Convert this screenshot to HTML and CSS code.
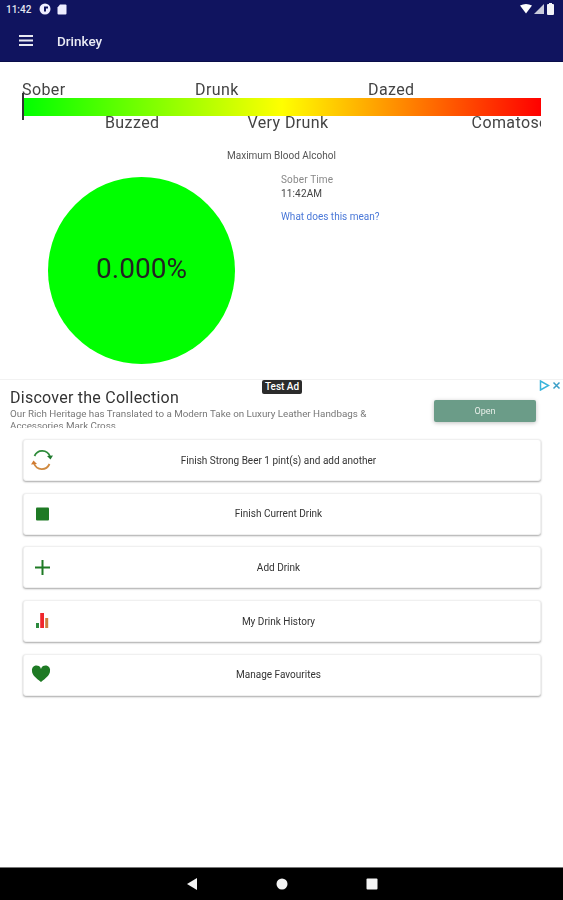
FILE: index.html
```html
<!DOCTYPE html>
<html lang="en">
<head>
<meta charset="utf-8">
<title>Drinkey</title>
<link rel="stylesheet" href="styles.css">
</head>
<body>
<div class="screen">
  <header class="appbar">
    <div class="status">
      <span class="clock">11:42</span>
      <svg class="st-icon" width="12" height="12" viewBox="0 0 12 12"><circle cx="6" cy="6" r="5.5" fill="#eef"/><path d="M5 3.500h4v2H7v3H5z" fill="#10145f"/></svg>
      <svg class="st-icon" width="10" height="11" viewBox="0 0 10 11"><path d="M3 .5h5.500a1 1 0 0 1 1 1v8a1 1 0 0 1-1 1h-7a1 1 0 0 1-1-1V3.500z" fill="#eef"/></svg>
      <span class="spacer"></span>
      <svg width="12" height="10" viewBox="0 0 12 10"><path d="M0 1.500Q6-1.500 12 1.500L6 9.500z" fill="#fff"/></svg>
      <svg class="sig" width="10" height="10" viewBox="0 0 10 10"><path d="M10 0v10H0z" fill="#c9cbdc"/></svg>
      <svg class="bat" width="7" height="12" viewBox="0 0 7 12"><path d="M2 0h3v1h1a1 1 0 0 1 1 1v9a1 1 0 0 1-1 1H1a1 1 0 0 1-1-1V2a1 1 0 0 1 1-1h1z" fill="#f2f3f8"/></svg>
    </div>
    <div class="toolbar">
      <svg class="menu" width="14" height="11" viewBox="0 0 14 11"><path d="M0 0h14v2H0zM0 4.500h14v2H0zM0 9h14v2H0z" fill="#e8e9f2"/></svg>
      <span class="title">Drinkey</span>
    </div>
  </header>

  <main class="content">
    <section class="scale">
      <div class="scale-top">
        <span>Sober</span><span>Drunk</span><span>Dazed</span>
      </div>
      <div class="bar"><i class="needle"></i></div>
      <div class="scale-bottom">
        <span class="lb-buzzed">Buzzed</span><span class="lb-very">Very Drunk</span><span class="lb-coma">Comatose</span>
      </div>
    </section>

    <p class="max-label">Maximum Blood Alcohol</p>

    <section class="gauge-row">
      <div class="gauge">0.000%</div>
      <div class="info">
        <div class="info-label">Sober Time</div>
        <div class="info-value">11:42AM</div>
        <a class="info-link">What does this mean?</a>
      </div>
    </section>

    <aside class="ad">
      <span class="ad-badge">Test Ad</span>
      <div class="ad-marks">
        <svg width="11" height="11" viewBox="0 0 11 11"><path d="M1.500 1v9l8-4.500z" fill="none" stroke="#3ab4dc" stroke-width="1.500"/></svg>
        <svg width="9" height="9" viewBox="0 0 9 9"><path d="M1.500 1.500l6 6M7.500 1.500l-6 6" stroke="#3a9fc8" stroke-width="1.500"/></svg>
      </div>
      <div class="ad-text">
        <h2>Discover the Collection</h2>
        <p>Our Rich Heritage has Translated to a Modern Take on Luxury Leather Handbags &amp; Accessories Mark Cross</p>
      </div>
      <div class="ad-open">Open</div>
    </aside>

    <nav class="actions">
      <button class="action">
        <svg class="ico" width="24" height="24" viewBox="0 -1 24 24">
          <path d="M4.500 7A8.500 9 0 0 1 20 7.500" fill="none" stroke="#2e8b3a" stroke-width="1.800"/>
          <path d="M17 7l3.500 3.500L23 6.500z" fill="#1f7a2e"/>
          <path d="M19.500 15A8.500 9 0 0 1 4 14.500" fill="none" stroke="#d08a40" stroke-width="1.800"/>
          <path d="M7 15l-3.500-3.500L1 15.500z" fill="#d07a30"/>
        </svg>
        <span>Finish Strong Beer 1 pint(s) and add another</span>
      </button>
      <button class="action">
        <svg class="ico" width="24" height="24" viewBox="0 0 24 24"><rect x="6" y="5.500" width="13" height="13" rx="1" fill="#1e7a24"/></svg>
        <span>Finish Current Drink</span>
      </button>
      <button class="action">
        <svg class="ico" width="24" height="24" viewBox="0 0 24 24"><path d="M5 12.500h15M12.500 5v15" stroke="#1e7a24" stroke-width="2"/></svg>
        <span>Add Drink</span>
      </button>
      <button class="action">
        <svg class="ico" width="24" height="24" viewBox="0 0 24 24"><rect x="6" y="14" width="3" height="5" fill="#2b8a3e"/><rect x="10.200" y="4" width="3.800" height="15" fill="#f0262c"/><rect x="15.200" y="9" width="3" height="10" fill="#cc8040"/></svg>
        <span>My Drink History</span>
      </button>
      <button class="action">
        <svg class="ico" width="24" height="24" viewBox="0 0 24 24"><path d="M11 19C6 15 2 12 2 8a4.500 4.500 0 0 1 9-2a4.500 4.500 0 0 1 9 2c0 4-4 7-9 11z" fill="#1e7a24"/></svg>
        <span>Manage Favourites</span>
      </button>
    </nav>
  </main>

  <footer class="sysnav">
    <svg width="12" height="12" viewBox="0 0 12 12"><path d="M11 0v12L1 6z" fill="#f4f4f4"/></svg>
    <svg width="12" height="12" viewBox="0 0 12 12"><circle cx="6" cy="6" r="5.500" fill="#f4f4f4"/></svg>
    <svg width="12" height="12" viewBox="0 0 12 12"><rect x=".5" y=".5" width="11" height="11" rx="1" fill="#f4f4f4"/></svg>
  </footer>
</div>
</body>
</html>
```
FILE: styles.css
```css
* { box-sizing: border-box; }
html, body { margin: 0; padding: 0; background: #fff; }
body { font-family: Roboto, "Liberation Sans", sans-serif; color: #333; }

.screen { width: 563px; height: 900px; display: flex; flex-direction: column; overflow: hidden; filter: blur(.4px); }

.appbar { height: 62px; background: #10145f; border-bottom: 1px solid #0a0d4a; flex: none; color: #fff; }
.status { height: 18px; display: flex; align-items: center; gap: 6px; padding: 0 9px 0 6px; }
.clock { font-size: 10px; font-weight: 500; color: #e4e6f0; margin-right: 2px; }
.spacer { flex: 1; }
.status svg { flex: none; }
.sig { margin-left: -4px; }
.bat { margin-left: -3px; }
.toolbar { height: 44px; display: flex; align-items: center; padding: 0 0 0 19px; }
.title { font-size: 13.500px; font-weight: 500; margin: 1px 0 0 24px; color: #e9eaf4; }

.content { flex: 1; display: flex; flex-direction: column; min-height: 0; }

.scale { padding: 19px 22px 0; }
.scale-top { display: grid; grid-template-columns: repeat(3, 173px); font-size: 16px; line-height: 17px; color: #444; letter-spacing: .4px; }
.bar { height: 18px; margin-left: 1px; background: linear-gradient(90deg, #00ff00 0%, #ffff00 50%, #ff0000 100%); position: relative; }
.needle { position: absolute; left: -1px; top: -5px; width: 1.500px; height: 27px; background: #333; }
.scale-bottom { display: flex; font-size: 16px; line-height: 19px; color: #444; letter-spacing: .4px; height: 19px; margin-top: -3px; overflow: hidden; white-space: nowrap; }
.scale-bottom span { flex: none; }
.lb-buzzed { margin-left: 83px; }
.lb-very { margin-left: 88px; }
.lb-coma { margin-left: 143px; }

.max-label { margin: 18px 0 0 227px; font-size: 10px; line-height: 11px; color: #555; }

.gauge-row { display: flex; margin-top: 13px; padding-left: 48px; height: 205px; flex: none; }
.gauge { width: 187px; height: 187px; border-radius: 50%; background: #00ff00; display: flex; align-items: center; justify-content: center; font-size: 28px; color: #222; flex: none; margin-top: 3px; padding-bottom: 4px; }
.info { margin-left: 46px; display: flex; flex-direction: column; font-size: 10px; line-height: 11px; }
.info-label { color: #888; letter-spacing: .15px; }
.info-value { color: #444; margin-top: 3px; letter-spacing: .15px; }
.info-link { color: #4a78d8; margin-top: 12px; }

.ad { height: 49px; position: relative; overflow: hidden; background: #fff; border-top: 1px solid #f2f2f2; display: flex; flex: none; }
.ad-badge { position: absolute; left: 262px; top: 0; width: 40px; height: 14px; background: #2b2b2b; color: #fff; font-size: 10px; line-height: 14px; text-align: center; border-radius: 2px; font-weight: 500; }
.ad-marks { position: absolute; right: 2px; top: 0; display: flex; align-items: center; gap: 2px; }
.ad-text { width: 400px; padding: 9px 0 0 10px; }
.ad-text h2 { margin: 0; font-size: 16px; line-height: 17px; font-weight: 400; color: #333; letter-spacing: .25px; }
.ad-text p { margin: 2px 0 0; font-size: 9.800px; line-height: 12px; color: #777; }
.ad-open { position: absolute; left: 434px; top: 20px; width: 102px; height: 22px; background: #6b9c88; color: #e8efe9; border-radius: 2px; font-size: 9px; line-height: 22px; text-align: center; box-shadow: 0 1px 4px rgba(0,0,0,.25); }

.actions { display: flex; flex-direction: column; gap: 11.700px; padding: 11px 22px 0 23px; }
.action { height: 42px; display: flex; align-items: center; position: relative; justify-content: center; width: 518px; padding: 0 7px 0 0; background: #fff; border: 1px solid #f0f0f0; border-radius: 3px; box-shadow: 0 1px 2px rgba(0,0,0,.35); font-family: inherit; font-size: 10px; color: #333; font-weight: 400; }
.action .ico { position: absolute; left: 6px; top: 8px; }

.sysnav { height: 33px; flex: none; background: #000; border-top: 1px solid #777; display: flex; align-items: center; justify-content: center; gap: 78px; }
```
